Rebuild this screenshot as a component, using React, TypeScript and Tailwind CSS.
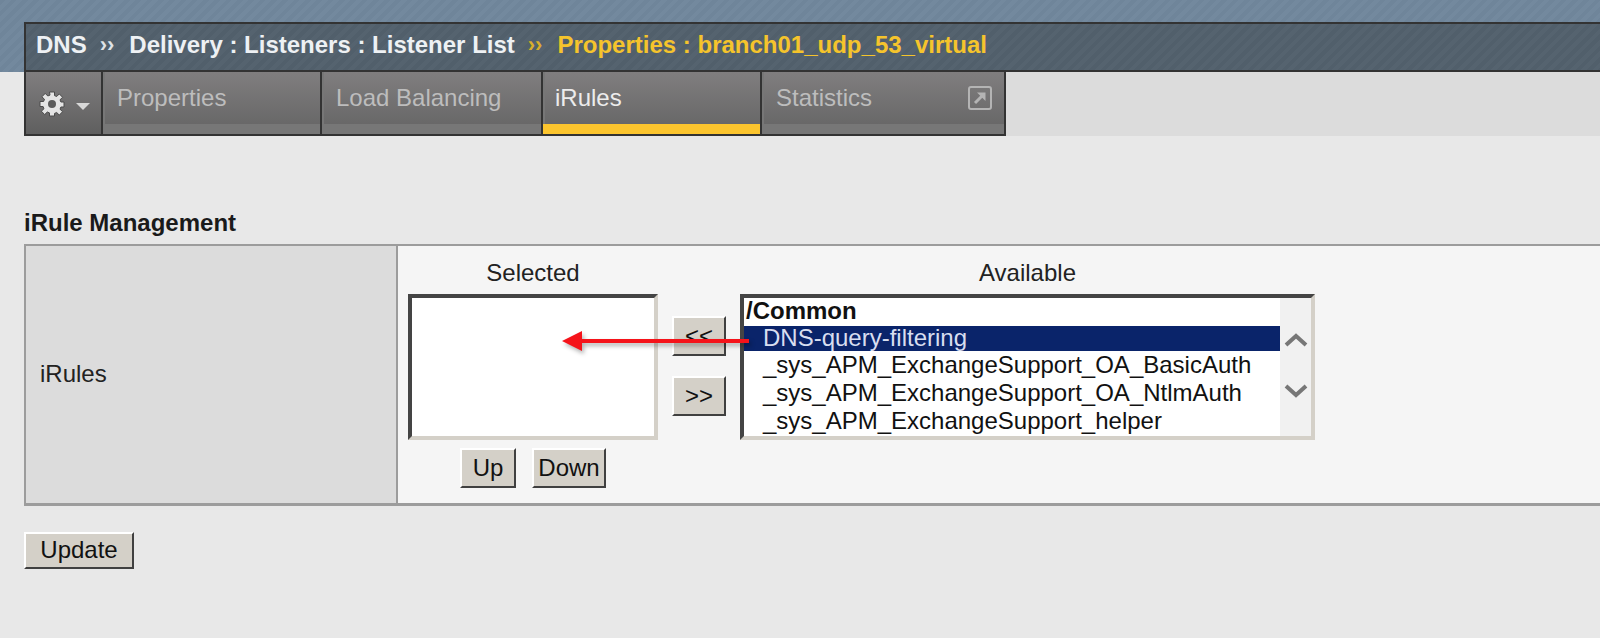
import type { ReactNode } from "react";

const FONT = "font-['Liberation_Sans',Arial,sans-serif]";

function Gear() {
  return (
    <svg width="26" height="26" viewBox="0 0 26 26" aria-hidden>
      <path
        d="M10.5 1h5v3.6l2.2.9 2.6-2.6 3.3 3.4-2.6 2.5.9 2.2H25v5h-3.1l-.9 2.2 2.6 2.5-3.3 3.4-2.6-2.6-2.2.9V25h-5v-3.1l-2.2-.9-2.6 2.6-3.3-3.4 2.6-2.5-.9-2.2H1v-5h3.6l.9-2.2-2.6-2.5 3.3-3.4 2.6 2.6 2.2-.9z"
        fill="#e4e4e4"
        stroke="#4a4a4a"
        strokeWidth="1"
      />
      <circle cx="13" cy="13" r="4" fill="#5a5a5a" />
    </svg>
  );
}

function ExternalIcon() {
  return (
    <svg width="24" height="24" viewBox="0 0 24 24" fill="none" aria-hidden>
      <rect x="1" y="1" width="22" height="22" rx="2" stroke="#b4b4b4" strokeWidth="2" />
      <path d="M7 17l8-8" stroke="#b4b4b4" strokeWidth="3" />
      <path d="M9 6.5h8.5V15z" fill="#b4b4b4" />
    </svg>
  );
}

function Tab({
  label,
  width,
  active,
  children,
}: {
  label: string;
  width: string;
  active?: boolean;
  children?: ReactNode;
}) {
  return (
    <div className={`flex h-full flex-col border-r-2 border-[#333] bg-gradient-to-b from-[#807e7f] to-[#646464] ${width}`}>
      <div className="flex flex-1 border-l-2 border-[#777]">
        <span
          className={`mt-[11px] text-[24px] leading-[30px] ${
            active ? "ml-[10px] text-[#ececec]" : "ml-[12px] text-[#bdbdbd]"
          }`}
        >
          {label}
        </span>
        {children}
      </div>
      <div className={`h-[10px] ${active ? "bg-[#fcc52e]" : "bg-[#777]"}`} />
    </div>
  );
}

function Button({ label, className }: { label: string; className: string }) {
  return (
    <button
      type="button"
      className={`flex items-center justify-center border-2 border-t-white border-l-white border-r-[#404040] border-b-[#404040] bg-[#d4d0c8] pb-[1px] text-[24px] leading-none text-[#111] ${className}`}
    >
      {label}
    </button>
  );
}

const rows = [
  "_sys_APM_ExchangeSupport_OA_BasicAuth",
  "_sys_APM_ExchangeSupport_OA_NtlmAuth",
  "_sys_APM_ExchangeSupport_helper",
];

export default function App() {
  return (
    <div className={`h-[638px] w-[1600px] overflow-hidden bg-[#e8e8e8] ${FONT}`}>
      <div className="h-[72px] bg-[#71879c] bg-[repeating-linear-gradient(135deg,#6f859a_0px,#6f859a_4px,#73899e_4px,#73899e_8px)] pl-[24px] pt-[22px]">
        <div className="flex h-[50px] items-center border-y-2 border-l-2 border-[#333] bg-[#52606c] bg-[repeating-linear-gradient(135deg,#515f6b_0px,#515f6b_4px,#55636f_4px,#55636f_8px)] pb-[4px] pl-[10px] text-[24px] font-bold leading-none">
          <span className="text-[#eef1f4]">DNS</span>
          <span className="ml-[13px] text-[22px] font-bold text-[#dfe3e7]">››</span>
          <span className="ml-[15px] text-[#eef1f4]">Delivery : Listeners : Listener List</span>
          <span className="ml-[13px] text-[22px] font-bold text-[#d9ae2a]">››</span>
          <span className="ml-[15px] text-[#f5c42c]">Properties : branch01_udp_53_virtual</span>
        </div>
      </div>

      <div className="ml-[24px] flex h-[64px] bg-[#dcdcdc]">
        <div className="flex h-full border-b-2 border-[#333]">
          <div className="flex w-[79px] items-center gap-[11px] border-x-2 border-[#333] bg-gradient-to-b from-[#807e7f] to-[#5f5f5f] pl-[13px] pt-[2px]">
            <Gear />
            <div className="mt-[5px] h-0 w-0 border-x-[7px] border-t-[7px] border-x-transparent border-t-[#d8d8d8]" />
          </div>
          <Tab label="Properties" width="w-[219px]" />
          <Tab label="Load Balancing" width="w-[221px]" />
          <Tab label="iRules" width="w-[219px]" active />
          <Tab label="Statistics" width="w-[244px]">
            <div className="ml-auto mr-[12px] mt-[14px]">
              <ExternalIcon />
            </div>
          </Tab>
        </div>
      </div>

      <h2 className="ml-[24px] mt-[73px] text-[24px] font-bold leading-[28px] text-[#1a1a1a]">iRule Management</h2>

      <div className="relative ml-[24px] mt-[7px] flex h-[262px] border-t-2 border-b-[3px] border-[#9c9c9c]">
        <div className="flex w-[374px] items-center border-x-2 border-[#9c9c9c] bg-[#dcdcdc] pb-[2px] pl-[14px] text-[24px] text-[#222]">
          iRules
        </div>
        <div className="flex flex-1 bg-[#f5f5f5] pl-[10px]">
          <div className="flex w-[250px] flex-col items-center">
            <div className="flex h-[48px] items-center pt-[6px] text-[24px] text-[#222]">Selected</div>
            <div className="h-[146px] w-full border-4 border-t-[#444] border-l-[#444] border-r-[#d4d0c8] border-b-[#d4d0c8] bg-white" />
            <div className="mt-[8px] flex gap-[16px]">
              <Button label="Up" className="h-[40px] w-[56px]" />
              <Button label="Down" className="h-[40px] w-[74px]" />
            </div>
          </div>
          <div className="ml-[14px] mt-[70px] flex flex-col gap-[20px]">
            <Button label="<<" className="h-[40px] w-[54px]" />
            <Button label=">>" className="h-[40px] w-[54px]" />
          </div>
          <div className="ml-[14px] flex w-[575px] flex-col items-center">
            <div className="flex h-[48px] items-center pt-[6px] text-[24px] text-[#222]">Available</div>
            <div className="flex h-[146px] w-full border-4 border-t-[#444] border-l-[#444] border-r-[#d4d0c8] border-b-[#d4d0c8] bg-white">
              <div className="flex-1 overflow-hidden text-[24px] leading-[28px] text-[#111]">
                <div className="h-[28px] pl-[2px] font-bold leading-[26px]">/Common</div>
                <div className="h-[25px] bg-[#0a246a] pl-[19px] leading-[24px] text-[#d8def0]">DNS-query-filtering</div>
                {rows.map((row) => (
                  <div key={row} className="pl-[19px]">
                    {row}
                  </div>
                ))}
              </div>
              <div className="flex w-[31px] flex-col items-center bg-[#f1f1f1] pt-[35px]">
                <svg width="24" height="14" viewBox="0 0 24 14" fill="none" aria-hidden>
                  <path d="M2 12l10-9 10 9" stroke="#777" strokeWidth="4" />
                </svg>
                <svg className="mt-[37px]" width="24" height="14" viewBox="0 0 24 14" fill="none" aria-hidden>
                  <path d="M2 2l10 9 10-9" stroke="#777" strokeWidth="4" />
                </svg>
              </div>
            </div>
          </div>
        </div>

        {/* red annotation arrow over the list widgets */}
        <svg
          className="absolute left-[530px] top-[83px] drop-shadow-[2px_3px_2px_rgba(0,0,0,0.3)]"
          width="204"
          height="32"
          viewBox="0 0 204 32"
          aria-hidden
        >
          <path d="M8 12l20-10v8h167v4H28v8z" fill="#f5131a" />
        </svg>
      </div>

      <Button label="Update" className="ml-[24px] mt-[26px] h-[37px] w-[110px]" />
    </div>
  );
}
